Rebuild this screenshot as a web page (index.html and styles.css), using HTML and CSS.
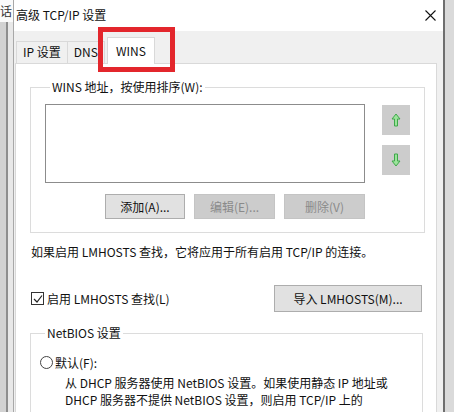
FILE: index.html
```html
<!DOCTYPE html>
<html lang="zh-CN">
  <head>
    <meta charset="UTF-8" />
    <meta name="viewport" content="width=device-width, initial-scale=1.0" />
    <title>高级 TCP/IP 设置</title>
    <link rel="stylesheet" href="styles.css">
  </head>
  <body>
    <div class="screen">
      <div class="back-left"><span class="back-title">话</span></div>

      <div class="dialog">
        <div class="titlebar">
          <span class="title">高级 TCP/IP 设置</span>
          <svg class="close" width="11" height="11" viewBox="0 0 11 11">
            <path d="M0.5 0.5 L10.5 10.5 M10.5 0.5 L0.5 10.5" stroke="#111" stroke-width="1.1" fill="none" />
          </svg>
        </div>

        <div class="tabs">
          <div class="tab">IP 设置</div>
          <div class="tab">DNS</div>
          <div class="tab active">WINS</div>
        </div>
        <div class="highlight"></div>

        <div class="panel">
          <fieldset class="group wins-group">
            <legend>WINS 地址，按使用排序(W):</legend>
            <div class="list-area">
              <div class="list-col">
                <div class="listbox"></div>
                <div class="btn-row">
                  <button class="btn">添加(A)...</button>
                  <button class="btn" disabled>编辑(E)...</button>
                  <button class="btn" disabled>删除(V)</button>
                </div>
              </div>
              <div class="move-col">
                <button class="move-btn" disabled>
                  <svg width="10" height="14" viewBox="0 0 10 14">
                    <path d="M5 1 L9 6 L6.5 6 L6.5 13 L3.5 13 L3.5 6 L1 6 Z" fill="#9be39b" stroke="#3fa84a" stroke-width="1" />
                  </svg>
                </button>
                <button class="move-btn" disabled>
                  <svg width="10" height="14" viewBox="0 0 10 14">
                    <path d="M5 13 L9 8 L6.5 8 L6.5 1 L3.5 1 L3.5 8 L1 8 Z" fill="#9be39b" stroke="#3fa84a" stroke-width="1" />
                  </svg>
                </button>
              </div>
            </div>
          </fieldset>

          <p class="note">如果启用 LMHOSTS 查找，它将应用于所有启用 TCP/IP 的连接。</p>

          <div class="lm-row">
            <label class="check">
              <span class="box">
                <svg width="10" height="10" viewBox="0 0 10 10">
                  <path d="M1 5 L4 8 L9 1.5" stroke="#222" stroke-width="1.2" fill="none" />
                </svg>
              </span>
              启用 LMHOSTS 查找(L)
            </label>
            <button class="btn import">导入 LMHOSTS(M)...</button>
          </div>

          <fieldset class="group netbios-group">
            <legend>NetBIOS 设置</legend>
            <label class="radio"><span class="dot"></span>默认(F):</label>
            <p class="desc">
              从 DHCP 服务器使用 NetBIOS 设置。如果使用静态 IP 地址或<br />
              DHCP 服务器不提供 NetBIOS 设置，则启用 TCP/IP 上的<br />
              NetBIOS。
            </p>
          </fieldset>
        </div>
      </div>

      <div class="back-right"></div>
    </div>
  </body>
</html>
```

FILE: styles.css
```css
body {
  margin: 0;
  font-family: "Noto Sans CJK SC", "Noto Sans", sans-serif;
  font-size: 12px;
  color: #111;
  background-color: #d6d6d6;
}
.screen {
  display: flex;
  width: 454px;
  height: 412px;
  overflow: hidden;
}
.back-left {
  width: 13px;
  flex-shrink: 0;
  overflow: hidden;
  background: linear-gradient(to right, #d2d2d2 0, #d2d2d2 6px, #8e8e8e 6px, #8e8e8e 8px, #e8e8e8 8px);
}
.back-title {
  display: block;
  width: 13px;
  height: 22px;
  overflow: hidden;
  line-height: 22px;
  white-space: nowrap;
  background-color: #fafafa;
  color: #333;
}
.back-right {
  width: 9px;
  flex-shrink: 0;
  border-left: 2px solid #6e6e6e;
  background-color: #dadada;
}
.dialog {
  position: relative;
  flex: 1;
  border-left: 1px solid #a8a8a8;
  background-color: #f0f0f0;
  overflow: hidden;
}
.titlebar {
  display: flex;
  align-items: center;
  justify-content: space-between;
  height: 31px;
  padding: 0 7px 0 2px;
  background-color: #fff;
}
.title {
  line-height: 16px;
  margin-top: -1px;
}
.close {
  display: block;
}
.tabs {
  display: flex;
  align-items: flex-end;
  height: 32px;
  padding-left: 2px;
}
.tab {
  height: 21px;
  line-height: 20px;
  padding: 0 6px;
  border: 1px solid #d9d9d9;
  border-bottom: none;
  margin-right: -1px;
  background-color: #f0f0f0;
}
.tab.active {
  position: relative;
  height: 26px;
  line-height: 26px;
  margin: 0 0 -1px 3px;
  padding: 0 8px;
  background-color: #fff;
  z-index: 1;
}
.highlight {
  position: absolute;
  left: 84px;
  top: 27px;
  width: 67px;
  height: 35px;
  border: 5px solid #e3262c;
  z-index: 2;
}
.panel {
  height: 360px;
  margin: 0 6px 0 1px;
  padding: 0 13px 0 14px;
  border: 1px solid #d9d9d9;
  background-color: #fff;
}
.group {
  margin: 0;
  padding: 0 14px 13px 14px;
  border: 1px solid #dcdcdc;
}
.group legend {
  margin-left: 5px;
  padding: 0 2px;
  line-height: 16px;
}
.wins-group {
  margin-top: 15px;
  padding-top: 9px;
}
.list-area {
  display: flex;
}
.list-col {
  width: 320px;
}
.listbox {
  height: 77px;
  border: 1px solid #8c8c8c;
  background-color: #fff;
}
.btn-row {
  display: flex;
  justify-content: flex-end;
  gap: 9px;
  margin-top: 11px;
}
.btn {
  width: 81px;
  height: 25px;
  padding: 0;
  font-family: inherit;
  font-size: 12px;
  color: #111;
  border: 1px solid #adadad;
  background-color: #e1e1e1;
}
.btn-row .btn:first-child {
  width: 80px;
}
.btn:disabled {
  color: #8a8a8a;
  border-color: #c4c4c4;
  background-color: #cccccc;
}
.move-col {
  display: flex;
  flex-direction: column;
  gap: 10px;
  margin: 1px 0 0 17px;
}
.move-btn {
  display: flex;
  align-items: center;
  justify-content: center;
  width: 28px;
  height: 30px;
  padding: 0;
  border: none;
  background-color: #cccccc;
}
.note {
  margin: 10px 0 0 1px;
  line-height: 17px;
}
.lm-row {
  display: flex;
  align-items: center;
  justify-content: space-between;
  margin-top: 25px;
}
.check {
  display: flex;
  align-items: center;
  gap: 3px;
  margin-left: 1px;
  line-height: 17px;
}
.box {
  display: flex;
  align-items: center;
  justify-content: center;
  width: 11px;
  height: 11px;
  border: 1px solid #333;
  background-color: #fff;
}
.import {
  width: 148px;
  height: 27px;
  margin-right: 1px;
}
.netbios-group {
  margin-top: 13px;
  padding: 13px 9px 0 9px;
  height: 100px;
}
.radio {
  display: flex;
  align-items: center;
  gap: 2px;
  line-height: 17px;
}
.dot {
  width: 11px;
  height: 11px;
  border: 1px solid #444;
  border-radius: 50%;
  background-color: #fff;
}
.desc {
  margin: 3px 0 0 25px;
  line-height: 17px;
  white-space: nowrap;
}
```
